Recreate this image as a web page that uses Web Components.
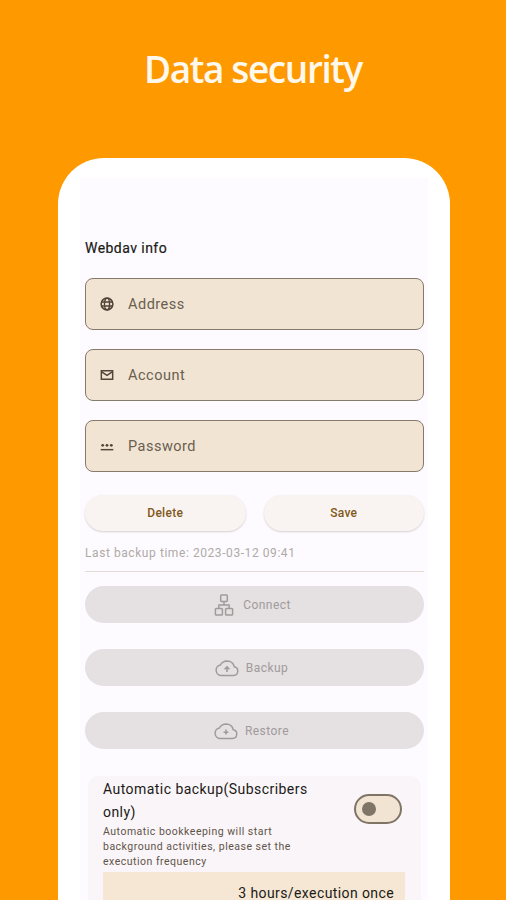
<!DOCTYPE html>
<html>
<head>
<meta charset="utf-8">
<title>Data security</title>
<style>
  html, body { margin: 0; padding: 0; height: 900px; overflow: hidden; background: #ff9900; }
  body { font-family: Roboto, "Liberation Sans", sans-serif; }
</style>
</head>
<body>
<promo-page>
  <phone-frame>
    <section-label>Webdav info</section-label>
    <text-field label="Address" icon="globe"></text-field>
    <text-field label="Account" icon="mail"></text-field>
    <text-field label="Password" icon="pass"></text-field>
    <action-row></action-row>
    <backup-time>Last backup time: 2023-03-12 09:41</backup-time>
    <wide-button label="Connect" icon="tree"></wide-button>
    <wide-button label="Backup" icon="up"></wide-button>
    <wide-button label="Restore" icon="down"></wide-button>
    <auto-card></auto-card>
  </phone-frame>
</promo-page>

<script>
const ICONS = {
  globe: `<circle cx="12" cy="12" r="8.8" fill="none" stroke="currentColor" stroke-width="2.4"/><ellipse cx="12" cy="12" rx="3.8" ry="8.8" fill="none" stroke="currentColor" stroke-width="2.1"/><path d="M3.4 9h17.2M3.4 15h17.2" stroke="currentColor" stroke-width="2.1"/>`,
  mail: `<path d="M3.5 5.5h17v13h-17z" fill="none" stroke="currentColor" stroke-width="2.2"/><path d="M3.5 7l8.5 5.5L20.5 7" fill="none" stroke="currentColor" stroke-width="2.2"/>`,
  pass: `<circle cx="5.5" cy="11" r="2.1" fill="currentColor"/><circle cx="12" cy="11" r="2.1" fill="currentColor"/><circle cx="18.5" cy="11" r="2.1" fill="currentColor"/><path d="M2.5 17.5h19" stroke="currentColor" stroke-width="2.2"/>`,
  tree: `<g fill="none" stroke="currentColor" stroke-width="1.5"><rect x="8.7" y="2" width="6.6" height="6.4" rx=".8"/><rect x="3.4" y="15.4" width="7" height="6.6" rx=".8"/><rect x="13.6" y="15.4" width="7" height="6.6" rx=".8"/><path d="M12 8.4v3.6M6.9 15.4V12h10.2v3.4"/></g>`,
  up: `<path d="M6.5 19.5h12a4.4 4.4 0 0 0 .8-8.7A7.6 7.6 0 0 0 12 5a7.6 7.6 0 0 0-6.6 4A5.3 5.3 0 0 0 6.5 19.5z" fill="none" stroke="currentColor" stroke-width="1.5"/><path d="M12 16v-5M9.6 13.2L12 10.8l2.4 2.4" fill="none" stroke="currentColor" stroke-width="1.6"/>`,
  down: `<path d="M6.5 19.5h12a4.4 4.4 0 0 0 .8-8.7A7.6 7.6 0 0 0 12 5a7.6 7.6 0 0 0-6.6 4A5.3 5.3 0 0 0 6.5 19.5z" fill="none" stroke="currentColor" stroke-width="1.5"/><path d="M12 10.5v5M9.6 13.2h4.8" fill="none" stroke="currentColor" stroke-width="1.6"/>`
};

class PromoPage extends HTMLElement {
  constructor() {
    super();
    this.attachShadow({ mode: 'open' });
    this.shadowRoot.innerHTML = `
      <style>
        :host { display: block; height: 900px; overflow: hidden; }
        h1 {
          margin: 0;
          padding-top: 43px;
          height: 158px;
          box-sizing: border-box;
          text-align: center;
          color: #fff8ec;
          font: 550 37px/52px "Open Sans", "Noto Sans", sans-serif;
          letter-spacing: -1.4px;
        }
      </style>
      <h1>Data security</h1>
      <slot></slot>
    `;
  }
}

class PhoneFrame extends HTMLElement {
  constructor() {
    super();
    this.attachShadow({ mode: 'open' });
    this.shadowRoot.innerHTML = `
      <style>
        :host {
          display: block;
          width: 392px;
          height: 800px;
          margin-left: 58px;
          background: #fff;
          border-radius: 46px 46px 0 0;
          padding: 20px 22px 0;
          box-sizing: border-box;
        }
        .screen {
          background: #fdfbff;
          height: 780px;
          padding: 0 4px 0 5px;
          box-sizing: border-box;
          display: flex;
          flex-direction: column;
        }
      </style>
      <div class="screen"><slot></slot></div>
    `;
  }
}

class SectionLabel extends HTMLElement {
  constructor() {
    super();
    this.attachShadow({ mode: 'open' });
    this.shadowRoot.innerHTML = `
      <style>
        :host {
          display: block;
          padding-top: 60px;
          height: 100px;
          flex: none;
          box-sizing: border-box;
          font-size: 14px;
          line-height: 20px;
          color: #201a17;
          letter-spacing: 0.45px;
          -webkit-text-stroke: 0.2px #201a17;
        }
      </style>
      <slot></slot>
    `;
  }
}

class TextField extends HTMLElement {
  constructor() {
    super();
    this.attachShadow({ mode: 'open' });
    this.shadowRoot.innerHTML = `
      <style>
        :host {
          display: flex;
          align-items: center;
          flex: none;
          height: 52px;
          margin-bottom: 19px;
          padding-left: 13px;
          box-sizing: border-box;
          background: #f1e4d3;
          border: 1px solid #857a6b;
          border-radius: 8px;
          color: #6a5e50;
          font-size: 14.5px;
          letter-spacing: 0.5px;
        }
        svg { width: 16px; height: 16px; margin-right: 13px; color: #51453a; }
      </style>
      <svg viewBox="0 0 24 24">${ICONS[this.getAttribute('icon')]}</svg>
      <span>${this.getAttribute('label')}</span>
    `;
  }
}

class ActionRow extends HTMLElement {
  constructor() {
    super();
    this.attachShadow({ mode: 'open' });
    this.shadowRoot.innerHTML = `
      <style>
        :host { display: flex; flex: none; gap: 18px; margin-top: 4px; }
        div {
          flex: 1;
          height: 36px;
          display: flex;
          align-items: center;
          justify-content: center;
          border-radius: 18px;
          background: #f9f3f2;
          box-shadow: 0 1px 2px rgba(60, 40, 20, 0.2);
          color: #80591a;
          font-size: 12px;
          font-weight: 500;
          letter-spacing: 0.3px;
        }
      </style>
      <div>Delete</div>
      <div>Save</div>
    `;
  }
}

class BackupTime extends HTMLElement {
  constructor() {
    super();
    this.attachShadow({ mode: 'open' });
    this.shadowRoot.innerHTML = `
      <style>
        :host {
          display: block;
          flex: none;
          height: 55px;
          padding-top: 14px;
          box-sizing: border-box;
          color: #b0aaa5;
          font-size: 12px;
          line-height: 16px;
          letter-spacing: 0.57px;
        }
        hr { margin: 10px 0 0; border: 0; border-top: 1px solid #e4dbd2; }
      </style>
      <slot></slot>
      <hr>
    `;
  }
}

class WideButton extends HTMLElement {
  constructor() {
    super();
    this.attachShadow({ mode: 'open' });
    this.shadowRoot.innerHTML = `
      <style>
        :host {
          display: flex;
          align-items: center;
          justify-content: center;
          gap: 7px;
          height: 37px;
          margin-bottom: 26px;
          padding-right: 6px;
          flex: none;
          border-radius: 19px;
          background: #e5e0e2;
          color: #a09b9b;
          font-size: 12px;
          letter-spacing: 0.45px;
        }
        svg { width: 24px; height: 24px; }
      </style>
      <svg viewBox="0 0 24 24">${ICONS[this.getAttribute('icon')]}</svg>
      <span>${this.getAttribute('label')}</span>
    `;
  }
}

class AutoCard extends HTMLElement {
  constructor() {
    super();
    this.attachShadow({ mode: 'open' });
    this.shadowRoot.innerHTML = `
      <style>
        :host {
          display: block;
          flex: none;
          margin: 1px 3px 0;
          padding: 0 15px 0;
          height: 140px;
          background: #faf5f8;
          border-radius: 10px 10px 0 0;
        }
        .top { display: flex; align-items: flex-start; }
        .copy { flex: none; width: 224px; }
        .title { font-size: 14px; line-height: 23px; color: #201a17; letter-spacing: 0.45px; padding-top: 2px; }
        .desc { font-size: 10.5px; line-height: 15px; color: #5f5449; letter-spacing: 0.5px; }
        .switch {
          width: 48px;
          height: 30px;
          box-sizing: border-box;
          margin: 18px 0 0 27px;
          border: 2px solid #7f7567;
          border-radius: 15px;
          background: #f1e4d3;
          display: flex;
          align-items: center;
          padding-left: 6px;
        }
        .switch i { width: 14px; height: 14px; border-radius: 50%; background: #7f7567; }
        .select {
          margin-top: 3px;
          width: 302px;
          height: 60px;
          background: #f5e7d3;
          box-sizing: border-box;
          padding: 13px 11px 0 0;
          text-align: right;
          font-size: 14px;
          letter-spacing: 0.4px;
          color: #201a17;
        }
      </style>
      <div class="top">
        <div class="copy">
          <div class="title">Automatic backup(Subscribers only)</div>
          <div class="desc">Automatic bookkeeping will start background activities, please set the execution frequency</div>
        </div>
        <div class="switch"><i></i></div>
      </div>
      <div class="select">3 hours/execution once</div>
    `;
  }
}

customElements.define('promo-page', PromoPage);
customElements.define('phone-frame', PhoneFrame);
customElements.define('section-label', SectionLabel);
customElements.define('text-field', TextField);
customElements.define('action-row', ActionRow);
customElements.define('backup-time', BackupTime);
customElements.define('wide-button', WideButton);
customElements.define('auto-card', AutoCard);
</script>
</body>
</html>
